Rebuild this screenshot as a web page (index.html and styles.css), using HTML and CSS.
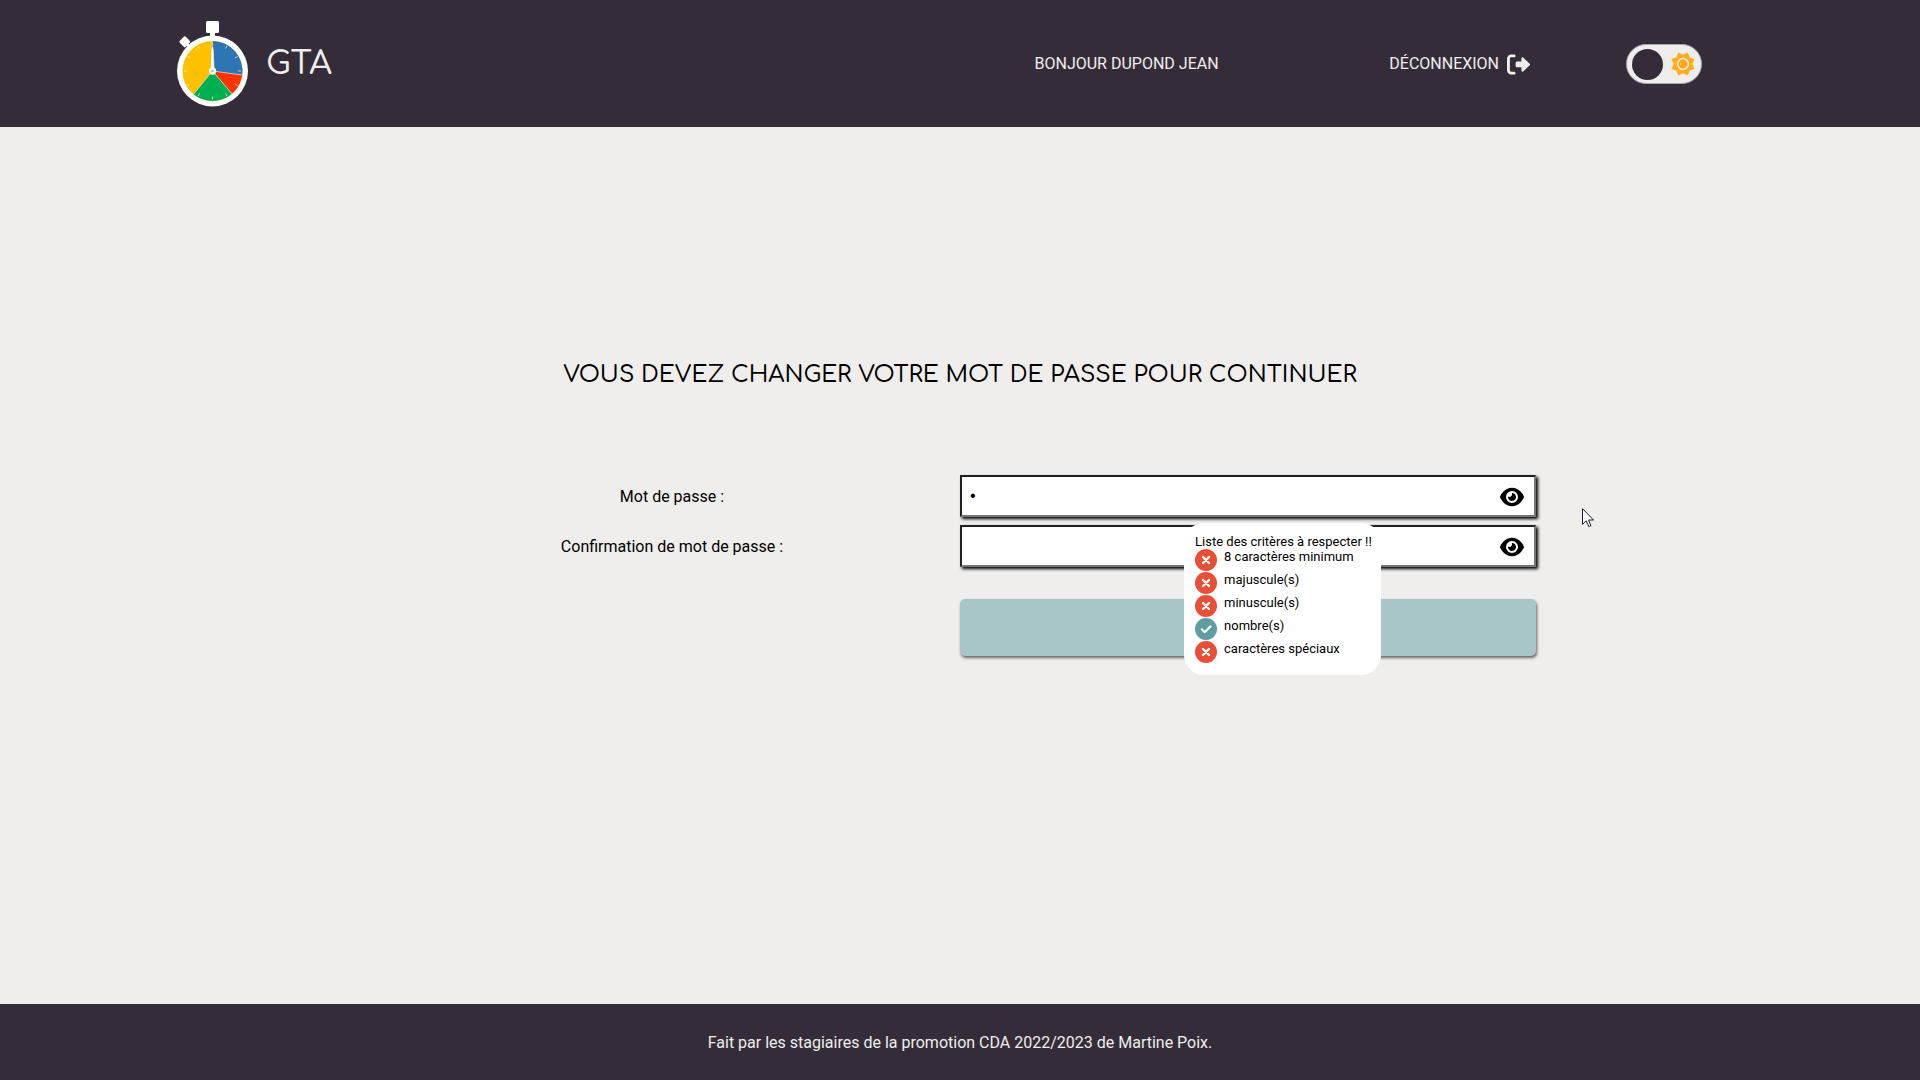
FILE: index.html
```html
<!DOCTYPE html>
<html lang="fr">
<head>
<meta charset="utf-8">
<meta name="viewport" content="width=device-width, initial-scale=1">
<title>GTA - Changement de mot de passe</title>
<link rel="stylesheet" href="styles.css">
</head>
<body>
<svg class="sprite" aria-hidden="true">
  <symbol id="eye" viewBox="0 0 576 512"><path d="M288 32c-80.8 0-145.5 36.800-192.600 80.600C48.600 156 17.300 208 2.500 243.700c-3.300 7.900-3.300 16.700 0 24.600C17.300 304 48.600 356 95.400 399.400C142.500 443.200 207.200 480 288 480s145.500-36.800 192.600-80.600c46.800-43.500 78.100-95.400 93-131.100c3.300-7.900 3.300-16.700 0-24.600c-14.900-35.700-46.200-87.700-93-131.100C433.500 68.800 368.800 32 288 32zM144 256a144 144 0 1 1 288 0 144 144 0 1 1 -288 0zm144-64c0 35.300-28.700 64-64 64c-7.100 0-13.900-1.200-20.300-3.300c-5.500-1.800-11.900 1.600-11.700 7.400c.3 6.900 1.300 13.800 3.200 20.700c13.700 51.200 66.400 81.600 117.600 67.900s81.600-66.400 67.900-117.600c-11.100-41.500-47.800-69.400-88.600-71.100c-5.800-.2-9.200 6.100-7.400 11.700c2.100 6.400 3.300 13.200 3.300 20.300z"/></symbol>
  <symbol id="cross" viewBox="0 0 22 22"><circle cx="11" cy="11" r="11" fill="#e94f37"/><path d="M8 8l6 6M14 8l-6 6" stroke="#fff" stroke-width="2.400" stroke-linecap="round"/></symbol>
  <symbol id="check" viewBox="0 0 22 22"><circle cx="11" cy="11" r="11" fill="#5f9ea0"/><path d="M6.800 11.300l2.900 2.900 5.700-5.700" fill="none" stroke="#fff" stroke-width="2.200" stroke-linecap="round" stroke-linejoin="round"/></symbol>
</svg>

<header class="header">
  <a class="brand" href="#">
    <svg class="brand-logo" viewBox="177 20 72 88" aria-hidden="true">
      <rect x="206" y="21" width="13" height="12" rx="1.500" fill="#fff"/>
      <rect x="210" y="32" width="5" height="6" fill="#fff"/>
      <rect x="180.500" y="37.500" width="8.500" height="8.500" rx="1.500" transform="rotate(-45 184.700 41.700)" fill="#fff"/>
      <path d="M185 42l6 6" stroke="#fff" stroke-width="3"/>
      <circle cx="212.500" cy="71" r="35.500" fill="#fff"/>
      <circle cx="212.500" cy="71" r="30" fill="#ffc000"/>
      <path d="M212.500 71V41A30 30 0 0 1 242.200 75z" fill="#2e75b6"/>
      <path d="M212.500 71L242.200 75A30 30 0 0 1 232 93.800z" fill="#ff3300"/>
      <path d="M212.500 71L232 93.800A30 30 0 0 1 193.500 94.200z" fill="#00b050"/>
      <path d="M212.500 71V41M212.500 71L242.200 75M212.500 71L232 93.800M212.500 71L193.500 94.200" stroke="#e8e3d5" stroke-width=".7"/>
      <path d="M225.500 48.500l1.500-2.600M235 58l2.600-1.500M238 71h3M235 84l2.600 1.500M225.500 93.500l1.500 2.600M212.500 96.500v3M199.500 93.500l-1.500 2.600M190 84l-2.600 1.500M187 71h-3M190 58l-2.600-1.500M199.500 48.500l-1.500-2.600" stroke="#e8e8e8" stroke-width="1" opacity=".8"/>
      <path d="M211.300 71L211.800 50l.7-3 .7 3 .8 21z" fill="#fff" stroke="#fff" stroke-width=".8"/>
      <circle cx="212.500" cy="71" r="3.700" fill="#fff"/>
      <circle cx="212.500" cy="71" r="1.200" fill="#c9b566"/>
    </svg>
    <span class="brand-name">GTA</span>
  </a>
  <span class="greeting">BONJOUR DUPOND JEAN</span>
  <a class="logout" href="#">DÉCONNEXION
    <svg class="logout-icon" viewBox="0 0 512 512" aria-hidden="true"><path d="M96 480h64c17.700 0 32-14.300 32-32s-14.300-32-32-32H96c-17.700 0-32-14.300-32-32V128c0-17.700 14.300-32 32-32h64c17.700 0 32-14.300 32-32s-14.300-32-32-32H96C43 32 0 75 0 128v256c0 53 43 96 96 96zM504.800 273.400c9.500-10 9.500-25 0-34.900l-144.100-136c-7-6.600-17.200-8.400-26-4.600s-14.500 12.500-14.500 22v72h-96c-17.700 0-32 14.300-32 32v64c0 17.700 14.300 32 32 32h96v72c0 9.600 5.700 18.200 14.500 22s19 2 26-4.600z"/></svg>
  </a>
  <label class="theme">
    <input class="theme-input" type="checkbox" aria-label="Thème sombre">
    <span class="theme-knob"></span>
    <svg class="theme-sun" viewBox="-256 -256 512 512" aria-hidden="true">
      <path d="M96-231L134-134 231-96 184 0 231 96 134 134 96 231 0 184-96 231-134 134-231 96-184 0-231-96-134-134-96-231 0-184z" fill="#ffae1f" stroke="#ffae1f" stroke-width="24" stroke-linejoin="round"/>
      <circle r="116" fill="none" stroke="#efeeec" stroke-width="30"/>
    </svg>
  </label>
</header>

<main class="main">
  <h1 class="title">VOUS DEVEZ CHANGER VOTRE MOT DE PASSE POUR CONTINUER</h1>
  <form class="form">
    <label class="label" for="password">Mot de passe :</label>
    <div class="field">
      <input class="input" id="password" type="password" value="a">
      <button class="reveal" type="button" aria-label="Afficher le mot de passe"><svg class="eye"><use href="#eye"/></svg></button>
      <div class="criteria">
        <p class="criteria-title">Liste des critères à respecter !!</p>
        <ul class="criteria-list">
          <li class="criterion"><svg class="state"><use href="#cross"/></svg>8 caractères minimum</li>
          <li class="criterion"><svg class="state"><use href="#cross"/></svg>majuscule(s)</li>
          <li class="criterion"><svg class="state"><use href="#cross"/></svg>minuscule(s)</li>
          <li class="criterion"><svg class="state"><use href="#check"/></svg>nombre(s)</li>
          <li class="criterion"><svg class="state"><use href="#cross"/></svg>caractères spéciaux</li>
        </ul>
      </div>
    </div>
    <label class="label" for="confirm">Confirmation de mot de passe :</label>
    <div class="field">
      <input class="input" id="confirm" type="password">
      <button class="reveal" type="button" aria-label="Afficher la confirmation"><svg class="eye"><use href="#eye"/></svg></button>
    </div>
    <button class="submit" type="submit" aria-label="Valider" disabled></button>
  </form>
  <svg class="pointer" viewBox="0 0 12 20" aria-hidden="true"><path d="M.5.700V16.300L4.200 12.800 6.800 18.600 9 17.600 6.500 12H11.500z" fill="#fff" stroke="#1a1a2a" stroke-width="1"/></svg>
</main>

<footer class="footer">Fait par les stagiaires de la promotion CDA 2022/2023 de Martine Poix.</footer>
</body>
</html>
```
FILE: styles.css
```css
* {
  box-sizing: border-box;
}

body {
  margin: 0;
  min-height: 100vh;
  display: flex;
  flex-direction: column;
  background: #efeeec;
  color: #000;
  font: 16px/20px Roboto, sans-serif;
}

.sprite {
  display: none;
}

.header {
  display: grid;
  grid-template-columns: 50% 17.35% 17.35% 1fr;
  align-items: center;
  padding: 20px 0 19px;
  background: #342d39;
  color: #efeeec;
}

.brand {
  display: flex;
  align-items: center;
  gap: 17px;
  margin-left: 177px;
  color: inherit;
  text-decoration: none;
}

.brand-logo {
  width: 72px;
  height: 88px;
}

.brand-name {
  font: 500 32px/40px Comfortaa, Lato, sans-serif;
}

.greeting {
  text-align: center;
}

.logout {
  display: flex;
  align-items: center;
  justify-content: center;
  gap: 8px;
  color: inherit;
  text-decoration: none;
}

.logout-icon {
  width: 23px;
  height: 23px;
  fill: currentColor;
}

.theme {
  display: flex;
  align-items: center;
  justify-content: space-between;
  width: 76px;
  height: 40px;
  padding: 0 6px 0 5px;
  border: 1px solid #a9a2aa;
  border-radius: 20px;
  background: #efeeec;
}

.theme-input {
  position: absolute;
  opacity: 0;
}

.theme-knob {
  width: 31px;
  height: 31px;
  border-radius: 50%;
  background: #342d39;
}

.theme-sun {
  width: 24px;
  height: 24px;
}

.main {
  position: relative;
  flex: 1;
  padding: 232px 20% 80px;
}

.title {
  margin: 0 0 84px;
  font: 500 23px/32px Comfortaa, Lato, sans-serif;
  text-align: center;
}

.form {
  display: grid;
  grid-template-columns: 1fr 1fr;
  row-gap: 8px;
  align-items: center;
}

.label {
  line-height: 22px;
  padding-top: 2px;
  text-align: center;
}

.field {
  position: relative;
}

.input {
  display: block;
  width: 100%;
  height: 42px;
  padding: 0 48px 0 8px;
  border: 2px solid;
  border-color: #212121 #767676 #767676 #212121;
  border-radius: 0;
  outline: none;
  background: #fff;
  box-shadow: 2px 2px 3px #000;
  font: 16px/20px "Liberation Sans", sans-serif;
}

.reveal {
  position: absolute;
  top: 10px;
  right: 12px;
  padding: 0;
  border: 0;
  background: none;
}

.eye {
  display: block;
  width: 24px;
  height: 24px;
}

.criteria {
  position: absolute;
  z-index: 1;
  top: 48px;
  left: 38.9%;
  padding: 11px 9px 11px 11px;
  border-radius: 20px;
  background: #fff;
  font-size: 13px;
  line-height: 15px;
  white-space: nowrap;
}

.criteria-title {
  margin: 0;
}

.criteria-list {
  margin: 0;
  padding: 0;
  list-style: none;
}

.criterion {
  display: flex;
  gap: 7px;
  height: 23px;
}

.state {
  width: 22px;
  height: 22px;
}

.submit {
  grid-column: 2;
  height: 57px;
  margin-top: 24px;
  border: 0;
  border-radius: 5px;
  background: #a8c5c7;
  box-shadow: 1px 2px 3px #666;
}

.pointer {
  position: absolute;
  top: 381px;
  left: 1582px;
  width: 12px;
  height: 20px;
}

.footer {
  padding: 29px 0 27px;
  background: #342d39;
  color: #efeeec;
  text-align: center;
}
```
